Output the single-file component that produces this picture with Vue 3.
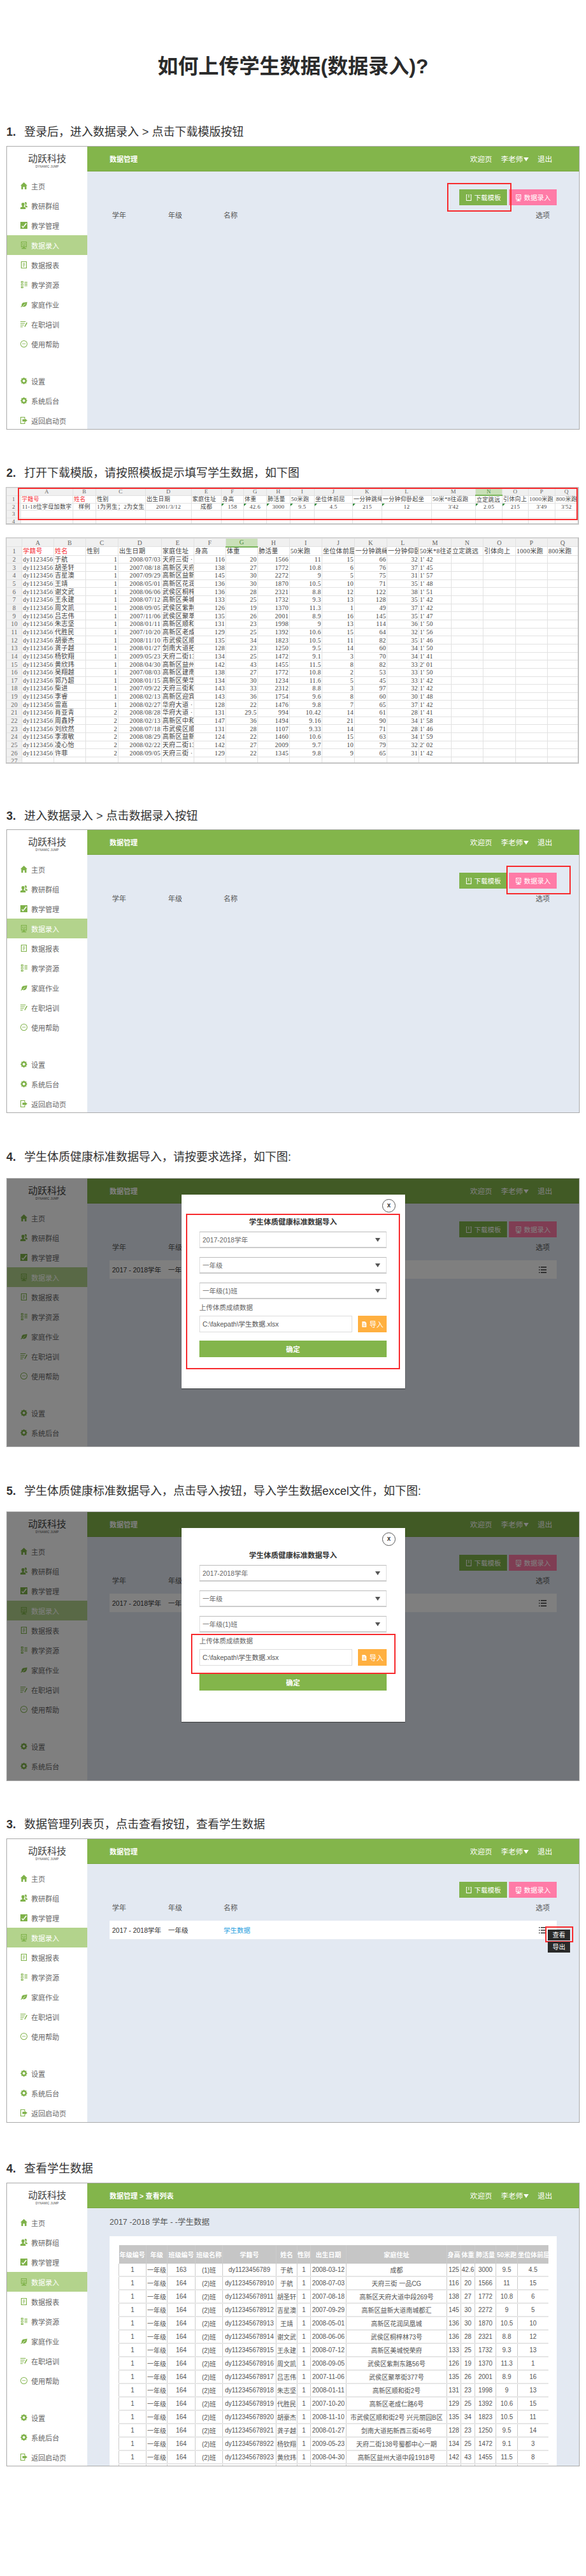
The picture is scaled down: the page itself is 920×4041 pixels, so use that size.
<template>
  <div class="page">
    <h1 class="page-title">如何上传学生数据(数据录入)?</h1>

    <section v-for="step in steps" :key="step.cls" class="step" :class="step.cls">
      <h2 class="step-title"><b>{{ step.no }}.</b><span>{{ step.text }}</span></h2>

      <!-- excel screenshots -->
      <template v-if="step.kind === 'sheet'">
        <div class="sheet sheet-small">
          <table>
            <colgroup>
              <col v-for="(w, i) in smallCols" :key="i" :style="{ width: w + 'px' }" />
            </colgroup>
            <tr class="letters">
              <th class="corner"></th>
              <th v-for="(l, i) in letters" :key="l" :class="{ picked: i === 13 }">{{ l }}</th>
            </tr>
            <tr>
              <th>1</th>
              <td v-for="(c, i) in templateHead" :key="i" :class="{ red: i < 2 }">{{ c }}</td>
            </tr>
            <tr class="sample">
              <th>2</th>
              <td v-for="(c, i) in templateRow" :key="i" :class="{ tick: hasTick(i) }">{{ c }}</td>
            </tr>
            <tr v-for="n in [3, 4]" :key="n">
              <th>{{ n }}</th>
              <td v-for="l in letters" :key="l"></td>
            </tr>
          </table>
          <div class="mark mark-sheet"></div>
        </div>

        <div class="sheet sheet-big">
          <table>
            <colgroup>
              <col v-for="(w, i) in bigCols" :key="i" :style="{ width: w + 'px' }" />
            </colgroup>
            <tr class="letters">
              <th class="corner"></th>
              <th v-for="(l, i) in letters" :key="l" :class="{ picked: i === 6 }">{{ l }}</th>
            </tr>
            <tr class="big-head">
              <th>1</th>
              <td v-for="(c, i) in bigHead" :key="i" :class="{ red: i < 2 }">{{ c }}</td>
            </tr>
            <tr v-for="(row, r) in students" :key="r">
              <th>{{ r + 2 }}</th>
              <td>dy1123456</td>
              <td>{{ row[0] }}</td>
              <td class="num">{{ row[1] }}</td>
              <td class="num">{{ row[2] }}</td>
              <td>{{ row[3] }}</td>
              <td v-for="(v, i) in row.slice(4, 11)" :key="i" class="num">{{ v }}</td>
              <td>{{ row[11] }}</td>
              <td v-for="n in 4" :key="n"></td>
            </tr>
            <tr>
              <th>27</th>
              <td v-for="l in letters" :key="l"></td>
            </tr>
          </table>
        </div>
      </template>

      <!-- app screenshots -->
      <div v-else class="screen">
        <aside class="side">
          <div class="logo">
            <strong>动跃科技</strong>
            <small>DYNAMIC JUMP</small>
          </div>
          <nav class="nav">
            <a v-for="item in navTop" :key="item.label" :class="{ active: item.label === '数据录入' }">
              <svg viewBox="0 0 12 14"><path :d="icons[item.icon]" fill-rule="evenodd" /></svg>
              {{ item.label }}
            </a>
          </nav>
          <nav class="nav nav-bottom">
            <a v-for="item in navBottom" :key="item.label">
              <svg viewBox="0 0 12 14"><path :d="icons[item.icon]" fill-rule="evenodd" /></svg>
              {{ item.label }}
            </a>
          </nav>
        </aside>

        <div class="body">
          <header class="topbar">
            <span class="crumb">{{ step.detail ? '数据管理 > 查看列表' : '数据管理' }}</span>
            <span class="top-links">
              <a>欢迎页</a>
              <a>李老师<i class="caret"></i></a>
              <a>退出</a>
            </span>
          </header>

          <main v-if="!step.detail" class="main">
            <div class="actions">
              <button class="btn btn-green">
                <svg viewBox="0 0 12 14"><path :d="icons.save" fill-rule="evenodd" /></svg>下载模板
              </button>
              <button class="btn btn-pink">
                <svg viewBox="0 0 12 14"><path :d="icons.screen" fill-rule="evenodd" /></svg>数据录入
              </button>
            </div>
            <div class="list-row list-head">
              <span>学年</span><span>年级</span><span>名称</span><span>选项</span>
            </div>
            <div v-if="step.row" class="list-row list-item">
              <span>2017 - 2018学年</span><span>一年级</span>
              <span class="link">学生数据</span>
              <svg class="menu" viewBox="0 0 12 12">
                <path d="M0 1h1.5v1.5H0zM3 1h9v1.5H3zM0 5.2h1.5v1.5H0zM3 5.2h9v1.5H3zM0 9.5h1.5V11H0zM3 9.5h9V11H3z" />
              </svg>
            </div>
          </main>

          <main v-else class="main main-detail">
            <p class="subtitle">2017 -2018 学年 - -学生数据</p>
            <div class="panel">
              <table class="data">
                <colgroup>
                  <col v-for="(w, i) in dataCols" :key="i" :style="{ width: w + 'px' }" />
                </colgroup>
                <tr>
                  <th v-for="h in dataHead" :key="h">{{ h }}</th>
                </tr>
                <tr v-for="(row, r) in dataRows" :key="r">
                  <td>1</td>
                  <td>一年级</td>
                  <td>{{ r === 0 ? 163 : 164 }}</td>
                  <td>{{ r === 0 ? '(1)班' : '(2)班' }}</td>
                  <td v-for="(v, i) in row" :key="i">{{ v }}</td>
                </tr>
              </table>
            </div>
          </main>
        </div>

        <div v-if="step.mark" class="mark" :class="step.mark"></div>

        <div v-if="step.tooltip" class="tooltip">
          <span>查看</span>
          <span>导出</span>
        </div>

        <template v-if="step.modal">
          <div class="mask"></div>
          <div class="modal">
            <span class="close">x</span>
            <h3>学生体质健康标准数据导入</h3>
            <div v-for="s in selects" :key="s" class="select">
              {{ s }}<i class="select-arrow"></i>
            </div>
            <label class="upload-label">上传体质成绩数据</label>
            <div class="upload">
              <div class="file">C:\fakepath\学生数据.xlsx</div>
              <button class="btn-import">
                <svg viewBox="0 0 12 14"><path :d="icons.file" fill-rule="evenodd" /></svg>导入
              </button>
            </div>
            <button class="btn-ok">确定</button>
            <div class="mark" :class="step.modal"></div>
          </div>
        </template>
      </div>
    </section>
  </div>
</template>

<script setup>
function gear() {
  let d = "";
  for (let i = 0; i < 16; i++) {
    const r = i % 2 === 0 ? 6 : 4.6;
    const a = (i * Math.PI) / 8;
    d += (i ? "L" : "M") + (6 + r * Math.sin(a)).toFixed(2) + " " + (7 - r * Math.cos(a)).toFixed(2);
  }
  return d + "ZM6 4.8a2.2 2.2 0 1 0 0 4.4a2.2 2.2 0 1 0 0-4.4Z";
}

const icons = {
  home: "M6 1L12 6.6H10.4V13H7.4V9H4.6V13H1.6V6.6H0Z",
  group: "M4.5 2a2.6 2.6 0 0 1 2.6 3c0 1.2-.6 2.2-1.3 2.7V9L9 10.2V13H0V10.2L3.2 9V7.7C2.5 7.2 1.9 6.200 1.900 5A2.600 2.600 0 0 1 4.500 2ZM8.500 1a2.200 2.200 0 0 1 2.200 2.600C10.700 4.800 10.200 5.400 9.700 5.800V7L12 8V10H10L7.800 8.900V8.100C8.500 7.300 8.800 6.200 8.600 5 8.500 3.800 8 3 7.300 2.300 7.600 1.500 8 1 8.500 1Z",
  edit: "M0 1H12V13H0ZM9.500 3L4.500 9.500 3 7.500 2 8.500 4.500 11.500 11 4Z",
  screen: "M1 1H11V10.500H7.500V12H10V13.500H2V12H4.500V10.500H1ZM2.200 2.200V9.300H9.800V2.200ZM4.300 3.800a1 1 0 1 0 .01 0ZM7.700 3.800a1 1 0 1 0 .01 0ZM3.500 7H8.500V8H3.500Z",
  doc: "M1 1H11V13H1ZM2.200 2.200V11.800H9.800V2.200ZM4 4H8V5H4ZM4 6.500H8V7.500H4ZM4 9H7V10H4Z",
  res: "M1 1H5V4.500H1ZM2 2V3.500H4V2ZM1 5.500H5V9H1ZM2 6.500V8H4V6.500ZM1 10H5V13H1ZM2 11V12H4V11ZM7 2H12V3H7ZM7 4H12V5H7ZM7 6.500H12V7.500H7ZM7 8.500H12V9.500H7Z",
  leaf: "M11.500 2.500C11.500 8 9.500 11 5.500 11 4.500 11 3.500 10.700 3 10.200L1.500 12 .5 11.200 2.200 9.200C1.700 7 3 4.500 5.500 3.800 7.500 3.200 10 3.500 11.500 2.500ZM8.500 5.500L4 9.500 4.600 10 9 6Z",
  list: "M0 2H9V3.200H0ZM0 5H7.500V6.200H0ZM0 8H6V9.200H0ZM0 11H4V12.200H0ZM10.500 4L12 4.800 8 12 6.800 11.200Z",
  help: "M6 1a6 6 0 1 1 0 12A6 6 0 1 1 6 1ZM6 2a5 5 0 1 0 0 10A5 5 0 1 0 6 2ZM3.400 6.300h1.200v1.300H3.400ZM5.400 6.300h1.200v1.300H5.400ZM7.400 6.300h1.200v1.300H7.400Z",
  gear: gear(),
  exit: "M0 1H8V4.500H6.800V2.200H1.200V11.800H6.800V9.500H8V13H0ZM7.500 5V3.800L12 7 7.500 10.200V9H3.500V5Z",
  save: "M1 1H3V2.200H2.200V11.800H9.800V2.200H9V1H11V13H1ZM5.400 1H6.600V7H5.400Z",
  file: "M2 1H8L11 4V13H2ZM4 5H8V6H4ZM4 7.500H9V8.500H4ZM4 10H9V11H4Z",
};

const navTop = [
  { label: "主页", icon: "home" },
  { label: "教研群组", icon: "group" },
  { label: "教学管理", icon: "edit" },
  { label: "数据录入", icon: "screen" },
  { label: "数据报表", icon: "doc" },
  { label: "教学资源", icon: "res" },
  { label: "家庭作业", icon: "leaf" },
  { label: "在职培训", icon: "list" },
  { label: "使用帮助", icon: "help" },
];
const navBottom = [
  { label: "设置", icon: "gear" },
  { label: "系统后台", icon: "gear" },
  { label: "返回启动页", icon: "exit" },
];

const steps = [
  { no: 1, cls: "s1", text: "登录后，进入数据录入 > 点击下载模版按钮", mark: "mark-download" },
  { no: 2, cls: "s2", text: "打开下载模版，请按照模板提示填写学生数据，如下图", kind: "sheet" },
  { no: 3, cls: "s3", text: "进入数据录入 > 点击数据录入按钮", mark: "mark-entry" },
  { no: 4, cls: "s4", text: "学生体质健康标准数据导入，请按要求选择，如下图:", row: true, modal: "mark-form" },
  { no: 5, cls: "s5", text: "学生体质健康标准数据导入，点击导入按钮，导入学生数据excel文件，如下图:", row: true, modal: "mark-upload" },
  { no: 3, cls: "s6", text: "数据管理列表页，点击查看按钮，查看学生数据", row: true, tooltip: true, mark: "mark-view" },
  { no: 4, cls: "s7", text: "查看学生数据", detail: true },
];

const selects = ["2017-2018学年", "一年级", "一年级(1)班"];

const letters = "ABCDEFGHIJKLMNOPQ".split("");
const smallCols = [22, 82, 36, 78, 72, 47, 35, 36, 37, 38, 60, 46, 78, 69, 42, 41, 42, 36];
const bigCols = [24, 50, 50, 51, 68, 51, 50, 50, 50, 51, 51, 51, 50, 51, 50, 51, 50, 48];

const templateHead = ["学籍号", "姓名", "性别", "出生日期", "家庭住址", "身高", "体重", "肺活量", "50米跑", "坐位体前屈", "一分钟跳绳", "一分钟仰卧起坐", "50米*8往返跑", "立定跳远", "引体向上", "1000米跑", "800米跑"];
const templateRow = ["11-18位字母加数字", "样例", "1为男生；2为女生", "2001/3/12", "成都", "158", "42.6", "3000", "9.5", "4.5", "215", "12", "3'42", "2.05", "215", "3'49", "3'52"];
const hasTick = (i) => i >= 5 && i !== 12 && i <= 14;

const bigHead = ["学籍号", "姓名", "性别", "出生日期", "家庭住址", "身高", "体重", "肺活量", "50米跑", "坐位体前屈", "一分钟跳绳", "一分钟仰卧起坐", "50米*8往返跑", "立定跳远", "引体向上", "1000米跑", "800米跑"];
const students = [
  ["于航", 1, "2008/07/03", "天府三街 ·", 116, 20, 1566, 11, 15, 66, 32, "1' 42"],
  ["胡圣轩", 1, "2007/08/18", "高新区天府", 138, 27, 1772, 10.8, 6, 76, 37, "1' 45"],
  ["吉星澳", 1, "2007/09/29", "高新区益新", 145, 30, 2272, 9, 5, 75, 31, "1' 57"],
  ["王靖", 1, "2008/05/01", "高新区花润", 136, 30, 1870, 10.5, 10, 71, 35, "1' 48"],
  ["谢文武", 1, "2008/06/06", "武侯区桐梓", 136, 28, 2321, 8.8, 12, 122, 38, "1' 51"],
  ["王永建", 1, "2008/07/12", "高新区美城", 133, 25, 1732, 9.3, 13, 128, 35, "1' 42"],
  ["周文凯", 1, "2008/09/05", "武侯区紫荆", 126, 19, 1370, 11.3, 1, 49, 37, "1' 42"],
  ["吕志伟", 1, "2007/11/06", "武侯区聚萃", 135, 26, 2001, 8.9, 16, 145, 35, "1' 47"],
  ["朱志坚", 1, "2008/01/11", "高新区顺和", 131, 23, 1998, 9, 13, 114, 36, "1' 50"],
  ["代胜民", 1, "2007/10/20", "高新区老成", 129, 25, 1392, 10.6, 15, 64, 32, "1' 56"],
  ["胡豪杰", 1, "2008/11/10", "市武侯区顺", 135, 34, 1823, 10.5, 11, 82, 35, "1' 46"],
  ["龚子越", 1, "2008/01/27", "剑南大道拓", 128, 23, 1250, 9.5, 14, 60, 34, "1' 50"],
  ["杨钦翔", 1, "2009/05/23", "天府二街13", 134, 25, 1472, 9.1, 3, 70, 34, "1' 41"],
  ["黄欣玮", 1, "2008/04/30", "高新区益州", 142, 43, 1455, 11.5, 8, 82, 33, "2' 01"],
  ["吴翔越", 1, "2007/08/03", "高新区建南", 138, 27, 1772, 10.8, 2, 53, 33, "1' 50"],
  ["郭乃超", 1, "2008/01/15", "高新区荣华", 134, 30, 1234, 11.6, 5, 45, 33, "1' 42"],
  ["柴进", 1, "2007/09/22", "天府三街和", 143, 33, 2312, 8.8, 3, 97, 32, "1' 42"],
  ["李睿", 1, "2008/02/13", "高新区迎宾", 143, 36, 1754, 9.6, 8, 60, 30, "1' 48"],
  ["雷嘉", 1, "2008/02/27", "华府大道 ·", 128, 22, 1476, 9.8, 7, 65, 37, "1' 42"],
  ["肖亚青", 2, "2008/08/28", "华府大道 ·", 131, 29.5, 994, 10.42, 14, 61, 28, "1' 41"],
  ["周鑫妤", 2, "2008/02/13", "高新区中和", 147, 36, 1494, 9.16, 21, 90, 34, "1' 58"],
  ["刘欣然", 2, "2008/07/18", "市武侯区顺", 131, 28, 1107, 9.33, 14, 71, 28, "1' 46"],
  ["李淑敏", 2, "2008/08/29", "高新区益新", 124, 22, 1460, 10.6, 15, 63, 34, "1' 59"],
  ["凌心怡", 2, "2008/02/22", "天府二街13", 142, 27, 2009, 9.7, 10, 79, 32, "2' 02"],
  ["许菲", 2, "2008/09/05", "天府三街 ·", 129, 22, 1345, 9.8, 9, 65, 31, "1' 42"],
];

const dataCols = [43, 33, 44, 43, 84, 33, 21, 56, 158, 22, 22, 33, 34, 48];
const dataHead = ["年级编号", "年级", "班级编号", "班级名称", "学籍号", "姓名", "性别", "出生日期", "家庭住址", "身高", "体重", "肺活量", "50米跑", "坐位体前屈"];
const dataRows = [
  ["dy1123456789", "于航", 1, "2008-03-12", "成都", 125, 42.6, 3000, 9.5, 4.5],
  ["dy112345678910", "于航", 1, "2008-07-03", "天府三街 一品CG", 116, 20, 1566, 11, 15],
  ["dy112345678911", "胡圣轩", 1, "2007-08-18", "高新区天府大道中段269号", 138, 27, 1772, 10.8, 6],
  ["dy112345678912", "吉星澳", 1, "2007-09-29", "高新区益新大道南城都汇", 145, 30, 2272, 9, 5],
  ["dy112345678913", "王靖", 1, "2008-05-01", "高新区花润凤凰城", 136, 30, 1870, 10.5, 10],
  ["dy112345678914", "谢文武", 1, "2008-06-06", "武侯区桐梓林73号", 136, 28, 2321, 8.8, 12],
  ["dy112345678915", "王永建", 1, "2008-07-12", "高新区美城悦荣府", 133, 25, 1732, 9.3, 13],
  ["dy112345678916", "周文凯", 1, "2008-09-05", "武侯区紫荆东路56号", 126, 19, 1370, 11.3, 1],
  ["dy112345678917", "吕志伟", 1, "2007-11-06", "武侯区聚萃街377号", 135, 26, 2001, 8.9, 16],
  ["dy112345678918", "朱志坚", 1, "2008-01-11", "高新区顺和街2号", 131, 23, 1998, 9, 13],
  ["dy112345678919", "代胜民", 1, "2007-10-20", "高新区老成仁路6号", 129, 25, 1392, 10.6, 15],
  ["dy112345678920", "胡豪杰", 1, "2008-11-10", "市武侯区顺和街2号 兴元丽园B区", 135, 34, 1823, 10.5, 11],
  ["dy112345678921", "龚子越", 1, "2008-01-27", "剑南大道拓新西三街46号", 128, 23, 1250, 9.5, 14],
  ["dy112345678922", "杨钦翔", 1, "2009-05-23", "天府二街138号蜀都中心一期", 134, 25, 1472, 9.1, 3],
  ["dy112345678923", "黄欣玮", 1, "2008-04-30", "高新区益州大道中段1918号", 142, 43, 1455, 11.5, 8],
  ["dy112345678924", "吴翔越", 1, "2007-08-03", "高新区建南", 138, 27, 1772, 10.8, 2],
];
</script>

<style>
html,
body {
  margin: 0;
  background: #fff;
}
</style>

<style scoped>
.page {
  height: 4041px;
  overflow: hidden;
  box-sizing: border-box;
  padding-top: 84px;
  color: #333;
  font-family: "Liberation Sans", "Noto Sans CJK SC", sans-serif;
}

.page-title {
  margin: 0;
  height: 40px;
  line-height: 40px;
  font-size: 32px;
  font-weight: 700;
  text-align: center;
  color: #2b2b2b;
}

.s1 { margin-top: 71px; }
.s2 { margin-top: 56px; }
.s3 { margin-top: 70px; }
.s4 { margin-top: 57px; }
.s5 { margin-top: 57px; }
.s6 { margin-top: 56px; }
.s7 { margin-top: 60px; }

.step-title {
  display: flex;
  margin: 0 0 10px;
  padding-left: 10px;
  height: 24px;
  line-height: 24px;
  font-size: 18px;
  font-weight: 400;
  white-space: nowrap;
}
.step-title b {
  width: 28px;
}
.s3 .step-title { margin-bottom: 9px; }
.s4 .step-title { margin-bottom: 21px; }
.s5 .step-title { margin-bottom: 20px; }

/* app screenshot */
.screen {
  position: relative;
  display: flex;
  box-sizing: border-box;
  width: 900px;
  height: 445px;
  margin-left: 10px;
  border: 1px solid #aaa;
  overflow: hidden;
  background: #e3e9f2;
}
.s4 .screen { height: 422px; }
.s5 .screen { height: 423px; }
.s6 .screen { height: 446px; }

.side {
  flex: 0 0 126px;
  background: #fff;
}
.logo {
  display: flex;
  flex-direction: column;
  align-items: center;
  height: 46px;
  padding-top: 9px;
  box-sizing: border-box;
  color: #444;
}
.logo strong {
  font-size: 15px;
  line-height: 20px;
  font-weight: 400;
}
.logo small {
  font-size: 4.5px;
  line-height: 5px;
  letter-spacing: 0.2px;
}
.nav a {
  display: flex;
  align-items: center;
  gap: 6px;
  height: 31px;
  padding-left: 21px;
  font-size: 11px;
  color: #666;
}
.nav svg {
  width: 11px;
  height: 13px;
  fill: #7fb24a;
}
.nav a.active {
  background: #b3d38c;
  color: #fff;
}
.nav a.active svg {
  fill: #7fb24a;
}
.nav-bottom {
  margin-top: 27px;
}

.body {
  flex: 1;
  min-width: 0;
}
.topbar {
  display: flex;
  align-items: center;
  justify-content: space-between;
  box-sizing: border-box;
  height: 39px;
  padding: 0 42px 0 35px;
  background: #83b54b;
  border-bottom: 1px solid #76a63f;
  color: #fff;
}
.crumb {
  font-size: 11px;
  font-weight: 700;
}
.top-links {
  display: flex;
  gap: 14px;
  font-size: 11.5px;
}
.caret {
  display: inline-block;
  margin-left: 1px;
  border: 4px solid transparent;
  border-top: 6px solid #fff;
  border-bottom: 0;
  vertical-align: 1px;
}

.main {
  padding: 28px 35px 0;
}
.actions {
  display: flex;
  justify-content: flex-end;
  gap: 3px;
}
.btn {
  display: flex;
  align-items: center;
  justify-content: center;
  gap: 4px;
  width: 75px;
  height: 25px;
  padding: 0;
  border: 0;
  color: #fff;
  font: inherit;
  font-size: 10.5px;
}
.btn svg {
  width: 10px;
  height: 12px;
  fill: #fff;
}
.btn-green { background: #7fb24a; }
.btn-pink { background: #ff7ba7; }

.list-row {
  display: grid;
  grid-template-columns: 88px 87px 1fr auto;
  align-items: center;
  padding: 0 11px 0 4px;
  font-size: 11px;
  color: #555;
}
.list-head {
  height: 30px;
}
.list-item {
  height: 29px;
  margin-top: 6px;
  padding-right: 16px;
  background: #fff;
  font-size: 10.5px;
  color: #333;
}
.link {
  color: #2a9fe0;
}
.menu {
  width: 12px;
  height: 12px;
  fill: #333;
}

.tooltip {
  position: absolute;
  left: 849px;
  top: 142px;
  display: flex;
  flex-direction: column;
  gap: 2px;
  width: 35px;
}
.tooltip span {
  height: 17px;
  line-height: 17px;
  text-align: center;
  background: #2a2a2a;
  color: #fff;
  font-size: 10px;
}

.mark {
  position: absolute;
  box-sizing: border-box;
  border: 2px solid #f72b2e;
  pointer-events: none;
}
.mark-download { left: 691px; top: 57px; width: 101px; height: 45px; }
.mark-entry { left: 784px; top: 56px; width: 101px; height: 45px; }
.mark-view { left: 845px; top: 137px; width: 44px; height: 25px; }
.mark-form { left: 7px; top: 30px; width: 336px; height: 244px; }
.mark-upload { left: 15px; top: 166px; width: 321px; height: 63px; }
.mark-sheet { left: 18px; top: 0; width: 879px; height: 51px; }

/* dialog */
.mask {
  position: absolute;
  inset: 0;
  background: rgba(0, 0, 0, 0.5);
}
.modal {
  position: absolute;
  left: 274px;
  top: 25px;
  box-sizing: border-box;
  width: 351px;
  height: 304px;
  padding: 32px 29px 0 28px;
  background: #fff;
  box-shadow: 0 1px 1px rgba(0, 0, 0, 0.4);
}
.close {
  position: absolute;
  right: 15px;
  top: 7px;
  box-sizing: border-box;
  width: 21px;
  height: 21px;
  line-height: 17px;
  border: 1.5px solid #555;
  border-radius: 50%;
  text-align: center;
  font-size: 10px;
  font-weight: 700;
}
.modal h3 {
  margin: 0 0 3px;
  height: 23px;
  line-height: 23px;
  text-align: center;
  font-size: 11.5px;
  font-weight: 700;
  color: #333;
}
.select,
.file {
  box-sizing: border-box;
  height: 26px;
  line-height: 24px;
  padding-left: 4px;
  border: 1px solid #e0e0e0;
  border-top-color: #bbb;
  border-bottom: 2px solid #ccc;
  font-size: 10.5px;
  color: #666;
}
.select {
  position: relative;
  margin-bottom: 14px;
}
.select-arrow {
  position: absolute;
  right: 9px;
  top: 9px;
  border: 4px solid transparent;
  border-top: 6px solid #555;
  border-bottom: 0;
}
.upload-label {
  display: block;
  margin-top: -8px;
  height: 14px;
  line-height: 14px;
  font-size: 10.5px;
  color: #666;
}
.upload {
  display: flex;
  gap: 9px;
  margin-top: 6px;
}
.file {
  flex: 0 0 240px;
  border: 1px solid #ddd;
  color: #555;
}
.btn-import {
  display: flex;
  align-items: center;
  justify-content: center;
  gap: 4px;
  flex: 1;
  padding: 0;
  border: 0;
  background: #ffb040;
  color: #fff;
  font: inherit;
  font-size: 11px;
}
.btn-import svg {
  width: 9px;
  height: 11px;
  fill: #fff;
}
.btn-ok {
  display: block;
  width: 100%;
  height: 26px;
  margin-top: 13px;
  padding: 0;
  border: 0;
  background: #83b54b;
  color: #fff;
  font: inherit;
  font-size: 11px;
  font-weight: 700;
}

/* data table page */
.main-detail {
  padding-top: 11px;
}
.subtitle {
  margin: 0 0 11px;
  height: 22px;
  line-height: 22px;
  font-size: 12.5px;
  color: #555;
}
.panel {
  padding: 14px;
  background: #fff;
}
.data {
  table-layout: fixed;
  width: 674px;
  border-collapse: collapse;
  font-size: 10px;
  color: #555;
}
.data th,
.data td {
  overflow: hidden;
  padding: 0;
  white-space: nowrap;
  text-align: center;
  border-right: 1px solid #ccc;
}
.data th {
  height: 29px;
  background: #c6c6c6;
  color: #fff;
}
.data td {
  height: 19px;
  border-bottom: 2px solid #e6e6e6;
}
.data td:first-child {
  border-left: 1px solid #ccc;
}
.data th:last-child,
.data td:last-child {
  border-right: 0;
}

/* excel */
.sheet {
  position: relative;
  box-sizing: border-box;
  width: 900px;
  margin-left: 9px;
  border: 1px solid #c4c4c4;
  border-width: 1px 2px 2px 1px;
  overflow: hidden;
  background: #fff;
}
.sheet table {
  table-layout: fixed;
  width: 897px;
  border-collapse: collapse;
  font-family: "Liberation Serif", "Noto Sans CJK SC", serif;
  color: #444;
}
.sheet th,
.sheet td {
  overflow: hidden;
  padding: 0 1px;
  white-space: nowrap;
  border: 1px solid #e2e2e2;
}
.sheet th {
  background: #f0f0f0;
  font-weight: 400;
  color: #666;
  text-align: center;
}
.sheet td {
  position: relative;
}
.sheet .red {
  color: #f5333a;
}
.letters th.picked {
  background: #c9e0b8;
  border-bottom: 2px solid #7ab55c;
  color: #4e8a3a;
}
.corner {
  background: #f0f0f0;
}

.sheet-small {
  height: 59px;
  margin-bottom: 20px;
  font-size: 9px;
}
.sheet-small th,
.sheet-small td {
  height: 10.4px;
  line-height: 10px;
  font-size: 9px;
  letter-spacing: 0.3px;
}
.sheet-small .sample td {
  text-align: center;
}
.tick::before {
  content: "";
  position: absolute;
  left: 0;
  top: 0;
  border: 2px solid transparent;
  border-top-color: #2f8a3a;
  border-left-color: #2f8a3a;
}

.sheet-big {
  height: 355px;
}
.sheet-big th,
.sheet-big td {
  height: 11.67px;
  line-height: 11px;
  font-size: 10px;
  letter-spacing: 0.3px;
}
.sheet-big .big-head td {
  height: 12px;
}
.sheet-big .num {
  text-align: right;
}
</style>
